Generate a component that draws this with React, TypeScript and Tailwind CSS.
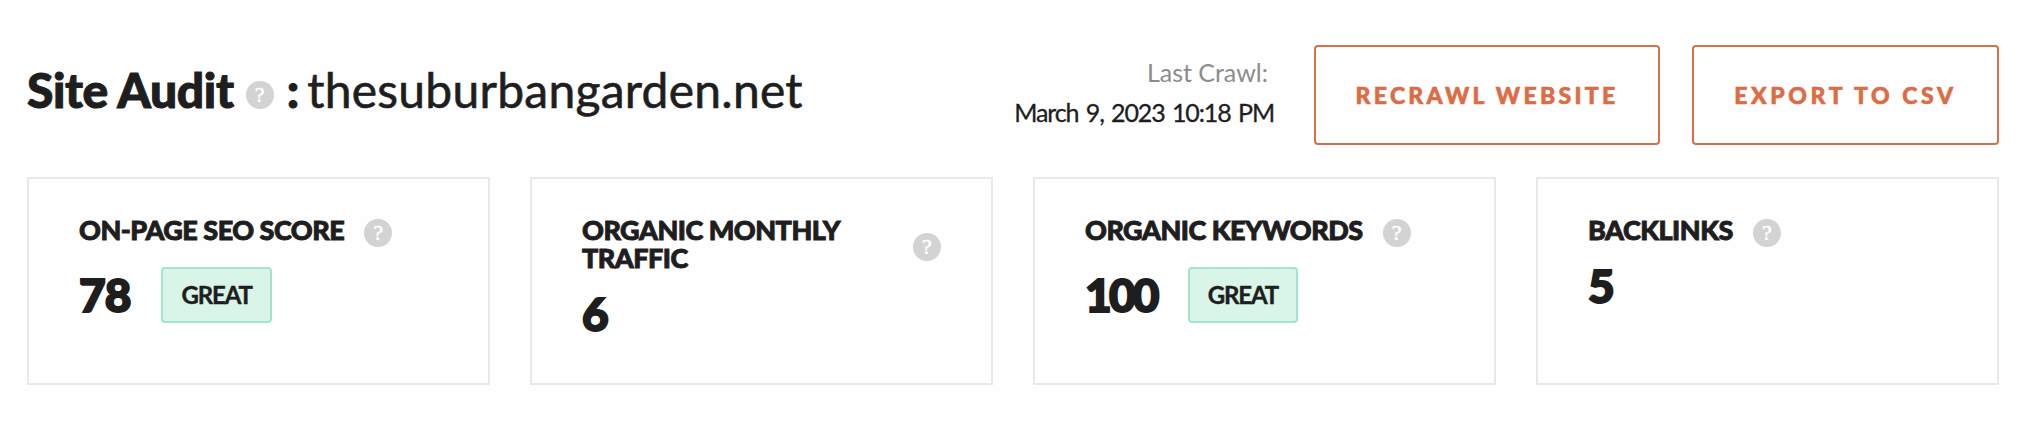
import clsx from "clsx";

type Stat = {
  label: string;
  value: string;
  rating?: string;
  labelClass?: string;
  valueClass: string;
};

const stats: Stat[] = [
  { label: "ON-PAGE SEO SCORE", value: "78", rating: "GREAT", valueClass: "mt-[23px] tracking-[-1px]" },
  { label: "ORGANIC MONTHLY TRAFFIC", value: "6", labelClass: "flex-1", valueClass: "mt-[18px]" },
  { label: "ORGANIC KEYWORDS", value: "100", rating: "GREAT", valueClass: "mt-[23px] tracking-[-2.8px]" },
  { label: "BACKLINKS", value: "5", valueClass: "mt-[18px]" },
];

function HelpIcon({ className }: { className?: string }) {
  return (
    <span
      className={clsx(
        "flex h-7 w-7 shrink-0 items-center justify-center rounded-full bg-[#d4d3d3] font-['Liberation_Serif',serif] text-[22px] leading-7 font-normal tracking-normal text-white [-webkit-text-stroke:0.5px]",
        className
      )}
    >
      ?
    </span>
  );
}

function StatCard({ label, value, rating, labelClass, valueClass }: Stat) {
  return (
    <div className="h-[208px] border-2 border-[#e9e9e9] px-[50px] pt-[37px]">
      <div className="flex items-center">
        <h2
          className={clsx(
            "text-[27px] leading-7 font-black tracking-[-0.5px] [-webkit-text-stroke:0.9px]",
            labelClass
          )}
        >
          {label}
        </h2>
        <HelpIcon className="ml-5 translate-y-[3px]" />
      </div>
      <div className={clsx("flex items-center", valueClass)}>
        <span className="text-[46px] leading-[48px] font-black [-webkit-text-stroke:2px]">{value}</span>
        {rating && (
          <span className="ml-[31px] flex h-14 items-center rounded-[4px] border-2 border-[#a2e5cb] bg-[#d9f5e7] px-[18px] text-2xl leading-6 font-bold tracking-[-1.1px] [-webkit-text-stroke:0.4px]">
            {rating}
          </span>
        )}
      </div>
    </div>
  );
}

function OutlineButton({ children, className }: { children: string; className: string }) {
  return (
    <button
      className={clsx(
        "h-[100px] rounded-[4px] border-2 border-[#d4724c] text-[23px] font-black whitespace-nowrap text-[#dc6c45] [-webkit-text-stroke:0.6px]",
        className
      )}
    >
      {children}
    </button>
  );
}

export default function App() {
  return (
    <div className="h-[422px] bg-[#fefefe] px-[27px] pt-[45px] pr-[37px] font-['Lato',sans-serif] text-[#1e1e1e]">
      <header className="flex h-[100px] items-center">
        <h1 className="flex items-center pb-[11px] text-5xl leading-[58px] whitespace-nowrap">
          <span className="font-black tracking-[-0.4px] [-webkit-text-stroke:1px]">Site Audit</span>
          <HelpIcon className="ml-3 translate-y-[5px]" />
          <span className="ml-[13px] font-black [-webkit-text-stroke:1px]">:</span>
          <span className="ml-2 tracking-[0.25px] [-webkit-text-stroke:0.6px]">thesuburbangarden.net</span>
        </h1>
        <div className="ml-auto pb-[7px] text-right text-[25px] leading-10 whitespace-nowrap">
          <p className="pr-1.5 text-[#8c8c8c]">Last Crawl:</p>
          <p className="tracking-[-1.1px] [word-spacing:2px] [-webkit-text-stroke:0.3px]">March 9, 2023 10:18 PM</p>
        </div>
        <OutlineButton className="ml-10 w-[346px] tracking-[3.3px]">RECRAWL WEBSITE</OutlineButton>
        <OutlineButton className="ml-8 w-[307px] tracking-[3.6px]">EXPORT TO CSV</OutlineButton>
      </header>
      <div className="mt-8 grid grid-cols-4 gap-10">
        {stats.map((stat) => (
          <StatCard key={stat.label} {...stat} />
        ))}
      </div>
    </div>
  );
}
